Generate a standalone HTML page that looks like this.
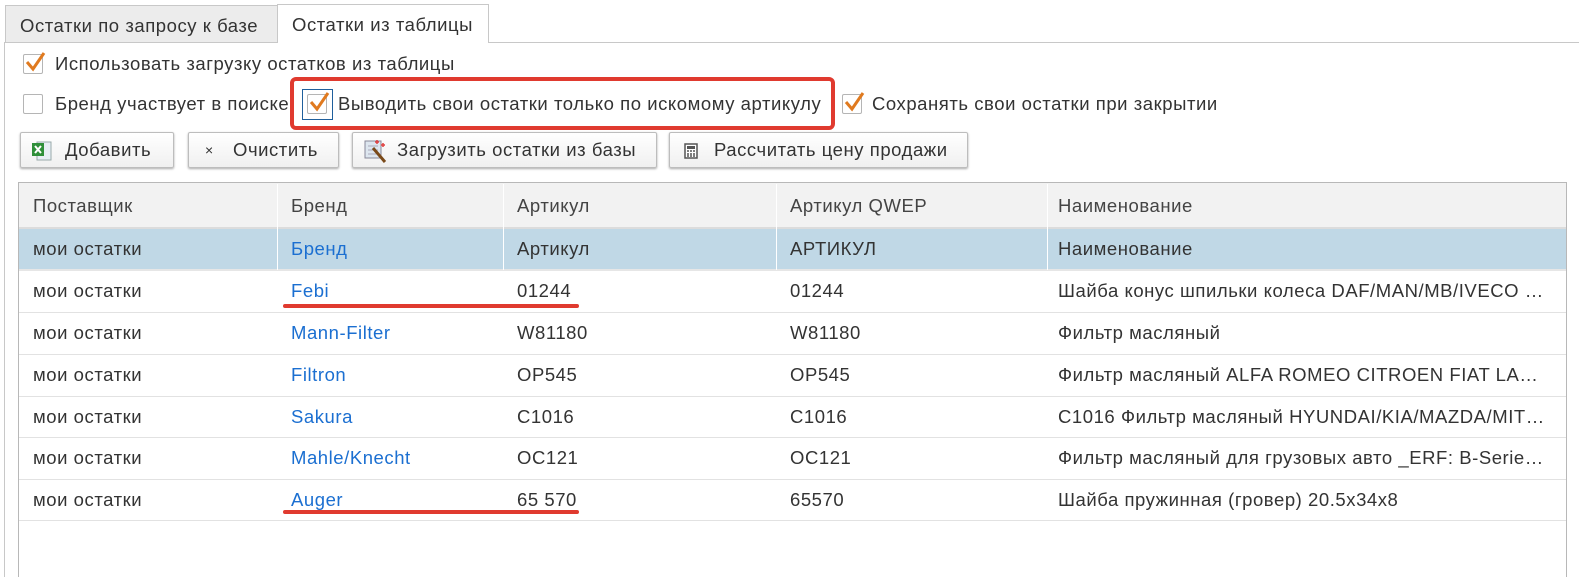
<!DOCTYPE html>
<html><head><meta charset="utf-8"><style>
*{margin:0;padding:0;box-sizing:border-box}
body{width:1579px;height:577px;background:#fff;font-family:"Liberation Sans",Arial,sans-serif;font-size:18.5px;letter-spacing:0.55px;color:#333;position:relative;overflow:hidden}
.a{position:absolute;white-space:nowrap}
.tab{position:absolute;border:1px solid #c8c8c8;border-bottom:none;padding:9px 0 0 14px}
.cb{position:absolute;width:20px;height:20px;border:1px solid #b5b5b5;border-radius:2px;background:#fff}
.btn{position:absolute;top:132px;height:36px;border:1px solid #bdbdbd;border-radius:2px;background:linear-gradient(#fff,#f0f0f0);box-shadow:0 1px 2px #aaa;line-height:34px}
.row{position:absolute;left:19px;width:1547px;border-bottom:1px solid #e2e2e2}
.c{position:absolute;top:0;white-space:nowrap}
.l{color:#1b6fd1}
.vl{position:absolute;top:184px;width:1px;height:86px;background:#ddd}
</style></head><body>
<div class="tab" style="left:5px;top:5px;width:273px;height:38px;background:#ececec">Остатки по запросу к базе</div>
<div class="tab" style="left:277px;top:4px;width:212px;height:39px;background:#fff;border-bottom:1px solid #fff">Остатки из таблицы</div>
<div class="a" style="left:488px;top:42px;width:1091px;height:1px;background:#c8c8c8"></div>
<div class="a" style="left:4px;top:42px;width:1px;height:535px;background:#c8c8c8"></div>
<div class="a" style="left:5px;top:42px;width:273px;height:1px;background:#c8c8c8"></div>

<div class="cb" style="left:23px;top:54px"></div>
<svg class="a" style="left:22px;top:49px" width="26" height="26"><path d="M5 13 L11 20 L22 4" stroke="#e07a1f" stroke-width="3" fill="none"/></svg>
<div class="a" style="left:55px;top:53px">Использовать загрузку остатков из таблицы</div>

<div class="cb" style="left:23px;top:94px"></div>
<div class="a" style="left:55px;top:93px">Бренд участвует в поиске</div>

<div class="a" style="left:290px;top:77px;width:545px;height:53px;border:4px solid #e03a2f;border-radius:6px"></div>
<div class="a" style="left:302px;top:89px;width:31px;height:31px;border:1px solid #1f5f9c"></div>
<div class="cb" style="left:307px;top:94px"></div>
<svg class="a" style="left:306px;top:89px" width="26" height="26"><path d="M5 13 L11 20 L22 4" stroke="#e07a1f" stroke-width="3" fill="none"/></svg>
<div class="a" style="left:338px;top:93px">Выводить свои остатки только по искомому артикулу</div>

<div class="cb" style="left:842px;top:94px"></div>
<svg class="a" style="left:841px;top:89px" width="26" height="26"><path d="M5 13 L11 20 L22 4" stroke="#e07a1f" stroke-width="3" fill="none"/></svg>
<div class="a" style="left:872px;top:93px">Сохранять свои остатки при закрытии</div>

<div class="btn" style="left:20px;width:154px"><svg style="position:absolute;left:10px;top:7px" width="22" height="22"><rect x="6" y="2" width="14" height="18" fill="#e8eef5" stroke="#9aa"/><rect x="1" y="3" width="12" height="13" fill="#2f8f3a"/><path d="M4 6 L10 13 M10 6 L4 13" stroke="#fff" stroke-width="2"/></svg><span style="position:absolute;left:44px">Добавить</span></div>
<div class="btn" style="left:188px;width:151px"><span style="position:absolute;left:16px;font-size:14px">×</span><span style="position:absolute;left:44px">Очистить</span></div>
<div class="btn" style="left:352px;width:305px"><svg style="position:absolute;left:10px;top:5px" width="26" height="26"><rect x="2" y="3" width="16" height="17" fill="#dde6ef" stroke="#889"/><path d="M5 8h10M5 12h10M5 16h10" stroke="#aab"/><path d="M10 10 L22 24" stroke="#7a4a1a" stroke-width="3"/><path d="M12 4h4M14 2v4M18 7h4M20 5v4" stroke="#e04040" stroke-width="1.5"/></svg><span style="position:absolute;left:44px">Загрузить остатки из базы</span></div>
<div class="btn" style="left:669px;width:299px"><svg style="position:absolute;left:14px;top:10px" width="14" height="16"><rect x="1" y="1" width="12" height="14" fill="#fff" stroke="#555" stroke-width="1.5"/><rect x="3" y="3" width="8" height="3" fill="#555"/><path d="M3 8h2M6 8h2M9 8h2M3 11h2M6 11h2M9 11h2M3 13h2M6 13h2M9 13h2" stroke="#555" stroke-width="1.5"/></svg><span style="position:absolute;left:44px">Рассчитать цену продажи</span></div>

<div class="a" style="left:18px;top:182px;width:1549px;height:395px;border:1px solid #b8b8b8;border-bottom:none"></div>
<div class="row" style="top:183px;height:46px;background:#f2f2f2;border-bottom:2px solid #dcdcdc">
<span class="c" style="left:14px;top:12px;color:#444">Поставщик</span><span class="c" style="left:272px;top:12px;color:#444">Бренд</span><span class="c" style="left:498px;top:12px;color:#444">Артикул</span><span class="c" style="left:771px;top:12px;color:#444">Артикул QWEP</span><span class="c" style="left:1039px;top:12px;color:#444">Наименование</span></div>
<div class="row" style="top:229px;height:42px;background:#c0d8e6;border-bottom:2px solid #e6e6e6">
<span class="c" style="left:14px;top:9px">мои остатки</span><span class="c l" style="left:272px;top:9px">Бренд</span><span class="c" style="left:498px;top:9px">Артикул</span><span class="c" style="left:771px;top:9px">АРТИКУЛ</span><span class="c" style="left:1039px;top:9px">Наименование</span></div>
<div class="vl" style="left:277px;background:#fff"></div><div class="vl" style="left:503px;background:#fff"></div><div class="vl" style="left:776px;background:#fff"></div><div class="vl" style="left:1047px;background:#fff"></div>

<div class="row" style="top:271px;height:42px"><span class="c" style="left:14px;top:9px">мои остатки</span><span class="c l" style="left:272px;top:9px">Febi</span><span class="c" style="left:498px;top:9px">01244</span><span class="c" style="left:771px;top:9px">01244</span><span class="c" style="left:1039px;top:9px">Шайба конус шпильки колеса DAF/MAN/MB/IVECO …</span></div>
<div class="row" style="top:313px;height:42px"><span class="c" style="left:14px;top:9px">мои остатки</span><span class="c l" style="left:272px;top:9px">Mann-Filter</span><span class="c" style="left:498px;top:9px">W81180</span><span class="c" style="left:771px;top:9px">W81180</span><span class="c" style="left:1039px;top:9px">Фильтр масляный</span></div>
<div class="row" style="top:355px;height:42px"><span class="c" style="left:14px;top:9px">мои остатки</span><span class="c l" style="left:272px;top:9px">Filtron</span><span class="c" style="left:498px;top:9px">OP545</span><span class="c" style="left:771px;top:9px">OP545</span><span class="c" style="left:1039px;top:9px">Фильтр масляный ALFA ROMEO CITROEN FIAT LA…</span></div>
<div class="row" style="top:397px;height:41px"><span class="c" style="left:14px;top:9px">мои остатки</span><span class="c l" style="left:272px;top:9px">Sakura</span><span class="c" style="left:498px;top:9px">C1016</span><span class="c" style="left:771px;top:9px">C1016</span><span class="c" style="left:1039px;top:9px">C1016 Фильтр масляный HYUNDAI/KIA/MAZDA/MIT…</span></div>
<div class="row" style="top:438px;height:42px"><span class="c" style="left:14px;top:9px">мои остатки</span><span class="c l" style="left:272px;top:9px">Mahle/Knecht</span><span class="c" style="left:498px;top:9px">OC121</span><span class="c" style="left:771px;top:9px">OC121</span><span class="c" style="left:1039px;top:9px">Фильтр масляный для грузовых авто _ERF: B-Serie…</span></div>
<div class="row" style="top:480px;height:41px"><span class="c" style="left:14px;top:9px">мои остатки</span><span class="c l" style="left:272px;top:9px">Auger</span><span class="c" style="left:498px;top:9px">65 570</span><span class="c" style="left:771px;top:9px">65570</span><span class="c" style="left:1039px;top:9px">Шайба пружинная (гровер) 20.5x34x8</span></div>

<div class="a" style="left:283px;top:304px;width:296px;height:4px;background:#e03a2f;border-radius:2px"></div>
<div class="a" style="left:283px;top:510px;width:296px;height:4px;background:#e03a2f;border-radius:2px"></div>
</body></html>
